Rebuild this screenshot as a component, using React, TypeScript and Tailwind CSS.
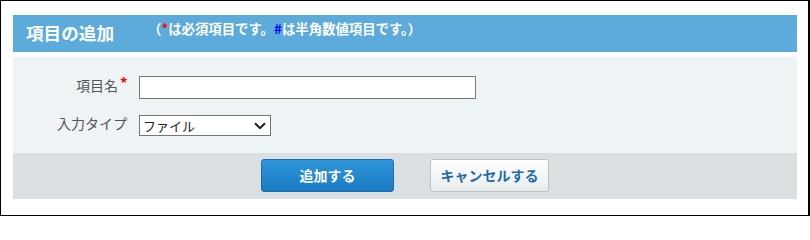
import React from "react"

const jp = { fontFamily: '"Noto Sans CJK JP", "Noto Sans", sans-serif' }

function Chevron() {
  return (
    <svg width="12" height="8" viewBox="0 0 12 8" className="absolute right-[4px] top-[6px]">
      <path d="M1 1.2 L6 6.2 L11 1.2" fill="none" stroke="#1e1e1e" strokeWidth="2" />
    </svg>
  )
}

export default function App() {
  return (
    <div
      style={jp}
      className="box-border h-[216px] w-[810px] border-t border-l border-r-2 border-b border-black bg-white pt-[14px] pl-[12px] pr-[11px]"
    >
      {/* header */}
      <div className="flex h-[37px] items-start bg-[#5dabdb] pl-[13px]">
        <h2 className="mt-[6px] text-[17.6px] font-bold leading-[24px] text-white">項目の追加</h2>
        <p className="ml-[34px] mt-[4px] text-[13.4px] font-bold leading-[18px] text-white">
          （<span className="text-[#ff0000]">*</span>は必須項目です。
          <span className="text-[#0000ff]">#</span>は半角数値項目です。）
        </p>
      </div>

      {/* form body */}
      <div className="mt-[5px] flex h-[96px] flex-col gap-[14px] bg-[#eef3f6] pt-[18px]">
        <div className="flex items-center">
          <label className="mb-[4px] w-[116px] text-right text-[14px] leading-[20px] text-[#555]">
            項目名
            <span className="relative -top-[2px] ml-[2px] inline-block w-[9px] text-left text-[15px] font-bold text-[#ff0000]">
              *
            </span>
          </label>
          <input
            type="text"
            className="ml-[10px] box-border h-[23px] w-[337px] border border-[#767676] bg-white outline-none"
          />
        </div>
        <div className="flex items-center">
          <label className="mb-[4px] w-[114px] text-right text-[14px] leading-[20px] text-[#555]">
            入力タイプ
          </label>
          <div className="relative ml-[12px] box-border h-[21px] w-[132px] border border-[#767676] bg-white">
            <span className="block pl-[3px] text-[13px] leading-[19px] text-[#222]">ファイル</span>
            <Chevron />
          </div>
        </div>
      </div>

      {/* footer */}
      <div className="flex h-[46px] justify-center gap-[36px] bg-[#dadfe2] pt-[6px]">
        <button className="box-border h-[33px] w-[133px] rounded-[3px] border border-[#1d6ea8] bg-gradient-to-b from-[#2d95da] to-[#1a7cc4] text-[14px] font-bold text-white">
          追加する
        </button>
        <button className="box-border h-[33px] w-[119px] rounded-[3px] border border-[#bcc3c7] bg-gradient-to-b from-white to-[#e9ebec] text-[14px] font-bold text-[#1c6bab]">
          キャンセルする
        </button>
      </div>
    </div>
  )
}
